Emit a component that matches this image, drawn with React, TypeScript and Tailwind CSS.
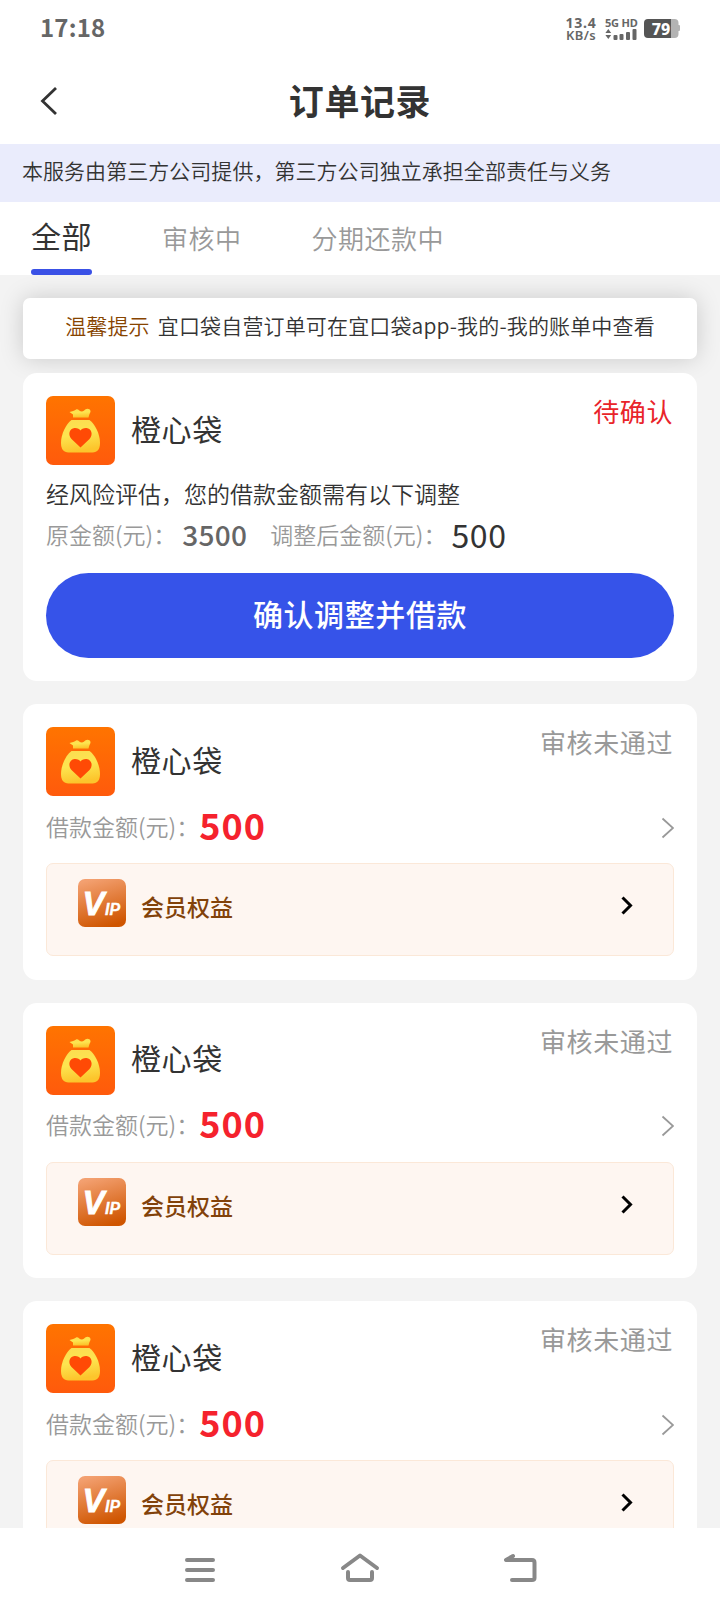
import { useState } from 'react';

const tabs = ['全部', '审核中', '分期还款中'];

const rejectedOrders = [
  { id: 1, name: '橙心袋', amount: 500 },
  { id: 2, name: '橙心袋', amount: 500 },
  { id: 3, name: '橙心袋', amount: 500 },
];

function StatusBar() {
  return (
    <div className="flex h-[58px] items-center justify-between pl-10 pr-10 text-[#666]">
      <span className="pb-1 font-['Noto_Sans_CJK_SC'] text-[24px] font-bold leading-none tracking-[0.2px]">17:18</span>
      <div className="flex items-center pb-px">
        <div className="mr-2 flex w-[32px] flex-col text-center font-['Noto_Sans'] text-[14px] font-bold leading-[13px]">
          <span className="tracking-[0.8px]">13.4</span>
          <span className="text-[13px] font-semibold tracking-[0.4px]">KB/s</span>
        </div>
        <div className="mr-[7px] w-[32px]">
          <div className="whitespace-nowrap font-['Noto_Sans'] text-[11px] font-bold leading-[12px] tracking-[-0.2px]">5G HD</div>
          <svg width="32" height="11" viewBox="0 0 32 11" fill="#666">
            <path d="M3.300 0L6.200 4H.4zM3.300 10L.4 6h5.800z" />
            <rect x="8.500" y="6" width="4" height="5" rx="1" />
            <rect x="14.500" y="5" width="4" height="6" rx="1" />
            <rect x="21" y="3" width="4" height="8" rx="1" />
            <rect x="27.500" y="0" width="4" height="11" rx="1" />
          </svg>
        </div>
        <svg width="36" height="19" viewBox="0 0 36 19">
          <path d="M27 0h3.500a4 4 0 0 1 4 4v2h.5a1 1 0 0 1 1 1v4a1 1 0 0 1-1 1h-.5v3a4 4 0 0 1-4 4H27z" fill="#b3b3b3" />
          <path d="M4 0h23v19H4a4 4 0 0 1-4-4V4a4 4 0 0 1 4-4z" fill="#555" />
          <text x="17" y="15.500" textAnchor="middle" fontFamily="Noto Sans" fontSize="16" fontWeight="800" fill="#fff">79</text>
        </svg>
      </div>
    </div>
  );
}

function Logo() {
  return (
    <svg className="h-[69px] w-[69px] shrink-0" viewBox="0 0 69 69">
      <defs>
        <linearGradient id="logoBg" x1="0" y1="0" x2="0" y2="1">
          <stop offset="0" stopColor="#ff7400" />
          <stop offset="1" stopColor="#ff5a0c" />
        </linearGradient>
        <linearGradient id="logoBag" x1="0" y1="0" x2="0.200" y2="1">
          <stop offset="0" stopColor="#fbdc50" />
          <stop offset="0.500" stopColor="#fde550" />
          <stop offset="1" stopColor="#fcc52c" />
        </linearGradient>
      </defs>
      <rect width="69" height="69" rx="7" fill="url(#logoBg)" />
      <path d="M23.500 16C26 15.500 28.500 14.500 30.500 13.200C32.500 12.800 33.500 15.500 36 15.500C38 15.500 38.500 13 41.500 12.800C44.500 13 45.500 15.500 43.500 18L42.500 21.500H27L27 18.500Z" fill="url(#logoBag)" />
      <path d="M25.500 24H43.500C49 28 54 38 54 47C54 53 51.500 56.500 46.500 56.500H22.500C17.500 56.500 15 53 15 47C15 38 20 28 25.500 24Z" fill="url(#logoBag)" />
      <path d="M34.500 51.500L25.500 43C21.500 38.500 23.500 32.500 28.500 32C31.500 31.800 33.500 33.200 34.500 34.500C35.500 33.200 37.500 31.800 40.500 32C45.500 32.500 47.500 38.500 43.500 43Z" fill="#ff4a05" />
    </svg>
  );
}

function VipIcon() {
  return (
    <svg className="h-12 w-12 shrink-0" viewBox="0 0 48 48">
      <defs>
        <linearGradient id="vipBg" x1="0.300" y1="0" x2="0.600" y2="1">
          <stop offset="0" stopColor="#f3a070" />
          <stop offset="1" stopColor="#cf5500" />
        </linearGradient>
      </defs>
      <rect width="48" height="48" rx="7" fill="url(#vipBg)" />
      <text x="4.500" y="36" fill="#fff" stroke="#fff" strokeWidth="0.800" fontFamily="Liberation Sans" fontStyle="italic" fontWeight="700" fontSize="33">
        V<tspan x="27" fontSize="16" strokeWidth="0.300">IP</tspan>
      </text>
    </svg>
  );
}

function OrderHeader({ name, status, pending = false }: { name: string; status: string; pending?: boolean }) {
  return (
    <div className="flex h-[69px]">
      <Logo />
      <h2 className="ml-4 self-center pb-[5px] text-[30px] tracking-[0.6px] text-[#333]">{name}</h2>
      <span className={`-mt-px -mr-px ml-auto pr-[2px] text-[26px] leading-8 tracking-[0.6px] ${pending ? 'text-[#e9242a]' : 'text-[#999]'}`}>
        {status}
      </span>
    </div>
  );
}

function PendingCard() {
  return (
    <section className="h-[308px] rounded-[14px] bg-white px-[23px] pt-[23px]">
      <OrderHeader name="橙心袋" status="待确认" pending />
      <p className="mt-[11px] text-[23px] leading-[34px] text-[#333] font-[350]">经风险评估，您的借款金额需有以下调整</p>
      <div className="flex h-12 items-center text-[23px] font-[350] text-[#999]">
        <span>原金额(元)：</span>
        <span className="ml-[6px] w-[88px] text-[28px] font-medium tracking-[0.3px] text-[#666]">3500</span>
        <span>调整后金额(元)：</span>
        <span className="ml-[5px] text-[32px] font-normal tracking-[0.6px] text-[#333]">500</span>
      </div>
      <button className="mt-[15px] flex h-[85px] w-full items-center justify-center rounded-full bg-[#3653e9] pb-[4px] text-[30px] font-medium tracking-[0.6px] text-white">
        确认调整并借款
      </button>
    </section>
  );
}

function RejectedCard({ name, amount }: { name: string; amount: number }) {
  return (
    <section className="h-[275.500px] shrink-0 rounded-[14px] bg-white px-[23px] pt-[23px]">
      <OrderHeader name={name} status="审核未通过" />
      <div className="flex h-[67px] items-center text-[23px] font-[350] text-[#999]">
        <span className="pb-[7px]">借款金额(元)：</span>
        <span className="pb-[12px] text-[36px] font-bold tracking-[1px] text-[#f5222d]">{amount}</span>
        <svg className="mb-[4px] ml-auto" width="13" height="22" viewBox="0 0 13 22" fill="none" stroke="#999" strokeWidth="1.800">
          <path d="M1.500 1.500L12 11L1.500 20.500" />
        </svg>
      </div>
      <div className="flex h-[93px] rounded-[7px] border border-[#fbe8d8] bg-[#fef6f1] pl-[31px] pr-10 pt-[15px]">
        <VipIcon />
        <span className="ml-[15px] mt-[10px] text-[23px] font-medium leading-[34px] text-[#82420a]">会员权益</span>
        <svg className="ml-auto mt-[17px]" width="12" height="19" viewBox="0 0 12 19" fill="none" stroke="#000" strokeWidth="3">
          <path d="M1.500 1.500L9.500 9.500L1.500 17.500" />
        </svg>
      </div>
    </section>
  );
}

function NavBar() {
  return (
    <nav className="flex h-[84px] items-center justify-center gap-[120px] bg-white">
      <svg width="40" height="40" viewBox="0 0 40 40" fill="none" stroke="#888" strokeWidth="4" strokeLinecap="round">
        <path d="M7 10H33M7 20H33M7 30H33" />
      </svg>
      <svg width="40" height="40" viewBox="0 0 40 40" fill="none" stroke="#888" strokeWidth="4" strokeLinecap="round" strokeLinejoin="round">
        <path d="M3 18L20 5.500L37 18M8 22V28Q8 30 10 30H30Q32 30 32 28V22" />
      </svg>
      <svg width="40" height="40" viewBox="0 0 40 40" fill="none" stroke="#888" strokeWidth="4" strokeLinecap="round" strokeLinejoin="round">
        <path d="M13 6L6 10H32Q34.500 10 34.500 12.500V28Q34.500 30 32 30H12" />
      </svg>
    </nav>
  );
}

export default function App() {
  const [active, setActive] = useState(0);

  return (
    <div className="flex h-[1612px] w-[720px] flex-col overflow-hidden bg-[#f3f3f3] font-['Noto_Sans_CJK_SC',sans-serif]">
      {/* Header */}
      <header className="bg-white">
        <StatusBar />
        <div className="flex h-[86px] items-center px-10">
          <svg width="18" height="30" viewBox="0 0 18 30" fill="none" stroke="#333" strokeWidth="2.800">
            <path d="M16 2L2.500 15L16 28" />
          </svg>
          <h1 className="flex-1 pb-px pr-[18px] text-center text-[35px] font-bold tracking-[0.6px] text-[#333]">订单记录</h1>
        </div>
      </header>

      <p className="flex h-[58px] items-center whitespace-nowrap bg-[#eaecfc] pb-[4px] pl-[22px] text-[21px] font-[350] tracking-[0.04px] text-[#333]">
        本服务由第三方公司提供，第三方公司独立承担全部责任与义务
      </p>

      {/* Tabs */}
      <div className="flex h-[73px] gap-[70px] bg-white pl-[31px]">
        {tabs.map((tab, i) => (
          <button
            key={tab}
            onClick={() => setActive(i)}
            className={`flex flex-col items-center justify-between tracking-[0.5px] ${active === i ? 'pt-[8px] text-[30px] text-[#333]' : 'pt-[11px] text-[26px] font-[350] text-[#999]'}`}
          >
            <span className="leading-[50px]">{tab}</span>
            {active === i && <span className="h-[6px] w-full rounded-full bg-[#3a51e6]" />}
          </button>
        ))}
      </div>

      <main className="flex flex-1 flex-col overflow-hidden px-[23px] pt-[23px]">
        <div className="flex h-[61px] shrink-0 justify-center gap-2 whitespace-nowrap rounded-[7px] bg-white pt-[11px] text-[21px] font-[350] leading-[32px] tracking-[0.15px] text-[#333] shadow-[0_0_23px_rgba(0,0,0,0.17)]">
          <span className="text-[#874400]">温馨提示</span>
          <span>宜口袋自营订单可在宜口袋app-我的-我的账单中查看</span>
        </div>
        <div className="relative mt-[14px] flex flex-col gap-[23px]">
          <PendingCard />
          {rejectedOrders.map((order) => (
            <RejectedCard key={order.id} name={order.name} amount={order.amount} />
          ))}
        </div>
      </main>

      <NavBar />
    </div>
  );
}
